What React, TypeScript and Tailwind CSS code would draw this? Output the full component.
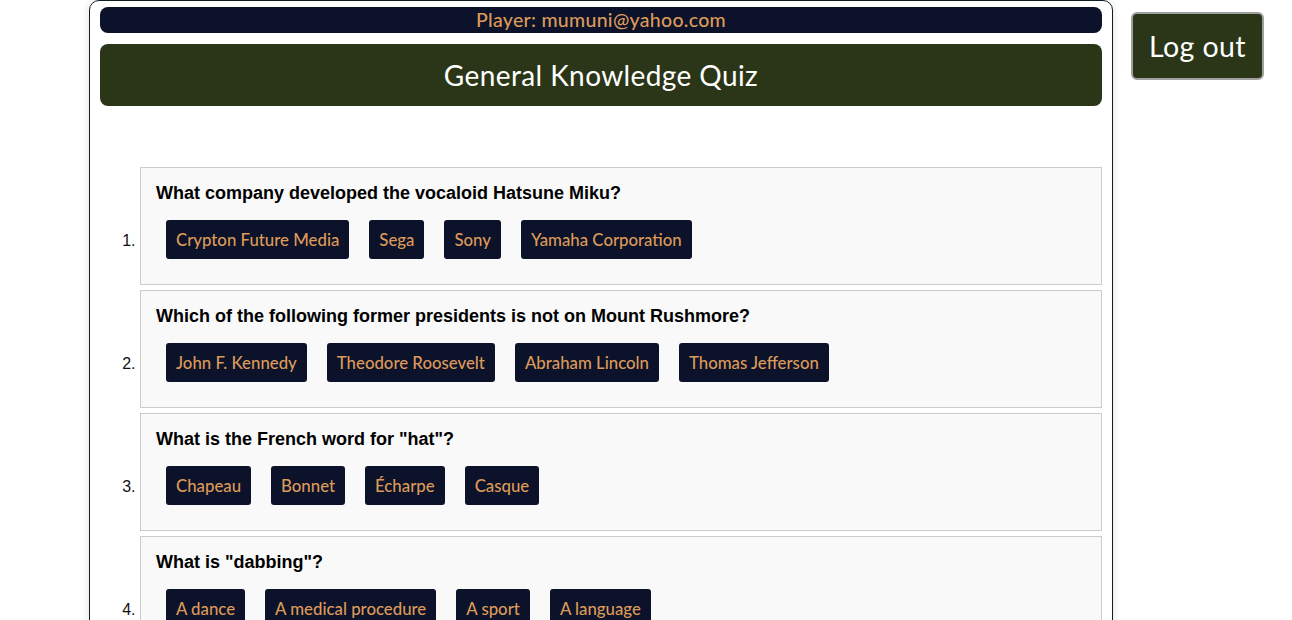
const questions = [
  {
    q: "What company developed the vocaloid Hatsune Miku?",
    answers: ["Crypton Future Media", "Sega", "Sony", "Yamaha Corporation"],
  },
  {
    q: "Which of the following former presidents is not on Mount Rushmore?",
    answers: ["John F. Kennedy", "Theodore Roosevelt", "Abraham Lincoln", "Thomas Jefferson"],
  },
  {
    q: 'What is the French word for "hat"?',
    answers: ["Chapeau", "Bonnet", "Écharpe", "Casque"],
  },
  {
    q: 'What is "dabbing"?',
    answers: ["A dance", "A medical procedure", "A sport", "A language"],
  },
  {
    q: "What is the capital of Australia?",
    answers: ["Sydney", "Canberra", "Melbourne", "Perth"],
  },
]

const raleway = "font-['Lato','Open_Sans',sans-serif]"

function QuestionCard({ q, answers }: { q: string; answers: string[] }) {
  return (
    <li className="mb-[5px]">
      <div className="inline-block w-full align-baseline border border-[#cccccc] bg-[#f9f9f9] pl-[15px] pr-[15px] pt-[15px] pb-[25px]">
        <h3 className="text-[18px] leading-[21px] font-bold text-black font-['Liberation_Sans',Arial,sans-serif]">
          {q}
        </h3>
        <div className="mt-[16px]">
          {answers.map((a) => (
            <button
              key={a}
              className={`inline-block h-[39px] mx-[10px] px-[10px] rounded-[3px] bg-[#0b1229] text-[#dd9a5a] text-[16.8px] font-medium ${raleway}`}
            >
              {a}
            </button>
          ))}
        </div>
      </div>
    </li>
  )
}

export default function App() {
  return (
    <div className="h-screen overflow-y-scroll bg-white">
      <div className="flex items-start">
        <div className="ml-[89px] w-[1024px] border border-[#0d1f1f] rounded-t-[10px] shadow-[0_0_8px_rgba(0,0,0,0.12)] px-[10px] pt-[6px] pb-[20px]">
          <div className={`h-[26px] rounded-[8px] bg-[#0b1229] text-center text-[#dd9a5a] text-[19.5px] tracking-[0.3px] leading-[26px] font-medium ${raleway}`}>
            Player: mumuni@yahoo.com
          </div>
          <div className={`mt-[11px] h-[62px] rounded-[8px] bg-[#2b3618] flex items-center justify-center text-white text-[28px] tracking-[0.4px] ${raleway}`}>
            General Knowledge Quiz
          </div>

          <ol className="list-decimal pl-10 mt-[61px] text-[16px] text-[#111] font-['Liberation_Sans',Arial,sans-serif]">
            {questions.map((item) => (
              <QuestionCard key={item.q} q={item.q} answers={item.answers} />
            ))}
          </ol>

          <div className="flex justify-center mt-4">
            <button className={`px-6 py-2 rounded-[6px] bg-[#2b3618] text-white text-[20px] ${raleway}`}>
              Submit
            </button>
          </div>
        </div>

        <button
          className={`ml-[18px] mt-[12px] w-[133px] h-[68px] rounded-[6px] border-2 border-[#a0a0a0] bg-[#2b3618] text-white text-[28.5px] tracking-[0.4px] ${raleway}`}
        >
          Log out
        </button>
      </div>
    </div>
  )
}
